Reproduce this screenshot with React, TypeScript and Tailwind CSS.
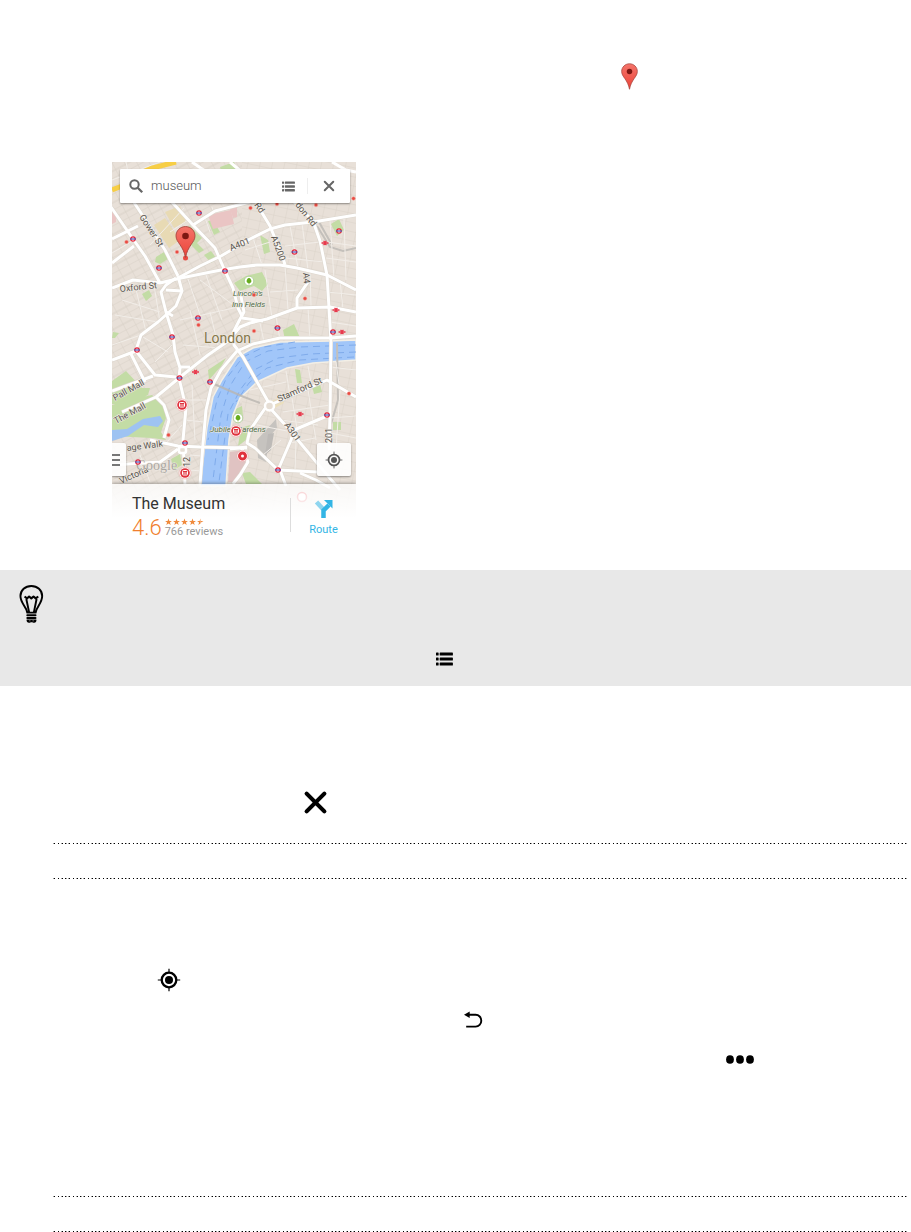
import { useId, useState } from "react";

const LABEL_FONT = "Roboto, 'Liberation Sans', sans-serif";

const PARKS = [
  "M112 405 L128 400 L152 395 L163 405 L166 418 L161 432 L166 440 L152 438 L112 436Z",
  "M112 381 L126 371 L142 388 L150 388 L148 395 L130 404 L112 404Z",
  "M178 232 L190 226 L202 238 L196 244Z M191 237 L204 250 L199 253 L189 243Z",
  "M208 221 L213 220 L220 232 L214 235Z",
  "M156 257 L164 252 L168 259 L160 264 L155 262Z",
  "M204 255 L211 251 L217 259 L211 263Z",
  "M220 167 L234 162 L240 177 L224 180Z",
  "M260 235 L268 240 L270 252 L264 254Z",
  "M234 283 L246 276 L262 272 L268 284 L262 291 L254 286 L240 291Z",
  "M142 294 L149 290 L152 296 L146 301Z",
  "M283 330 L294 324 L301 340 L285 340Z",
  "M208 370 L226 358 L222 365 L209 380Z",
  "M295 369 L300 370 L302 383 L297 383Z",
  "M233 410 L242 406 L243 416 L236 418Z",
  "M241 428 L250 425 L246 440 L238 446Z",
  "M171 459 L180 454 L182 465 L174 470Z",
  "M331 224 L339 219 L344 230 L337 236Z",
  "M113 332 L119 333 L115 338 L112 338Z",
  "M333 422 L341 422 L341 430 L333 430Z",
  "M242 473 L250 472 L262 484 L246 484Z",
  "M312 386 L320 384 L322 392 L314 394Z",
];

const BUILDINGS = [
  { d: "M154 225 L165 218 L180 240 L169 248Z", fill: "#e8dab4" },
  { d: "M165 212 L180 206 L186 222 L174 228Z", fill: "#e8dab4" },
  { d: "M208 215 L231 210 L234 224 L213 229Z", fill: "#eac5c4" },
  { d: "M112 208 L116 212 L116 222 L112 224Z", fill: "#eac5c4" },
  { d: "M230 209 L237 207 L237 217 L233 218Z", fill: "#eac5c4" },
  { d: "M230 452 L244 450 L246 466 L235 482 L228 482Z", fill: "#e0c3c2" },
  { d: "M257 440 L276 419 L277 428 L269 437 L266 462 L258 458Z", fill: "#c6c3bf" },
  { d: "M268 434 L274 433 L271 450 L265 455Z", fill: "#bdbab7" },
  { d: "M266 403 L282 397 L284 403 L268 412Z", fill: "#ecdfbd" },
];

const MINOR_ROADS = [
  "M150 245 L184 208", "M112 253 L134 240", "M205 218 L210 232",
  "M238 205 L246 190", "M212 207 L214 213", "M126 162 L134 202",
  "M112 180 L160 162", "M185 270 L200 315", "M200 280 L240 310", "M206 275 L222 320",
  "M115 315 L158 322", "M122 300 L160 312", "M135 285 L146 332", "M154 285 L160 322",
  "M112 345 L141 335", "M180 320 L238 307", "M183 345 L220 348", "M190 310 L200 355",
  "M210 312 L218 345", "M245 250 L270 242", "M252 235 L262 265", "M290 226 L298 268",
  "M302 223 L308 270", "M285 246 L320 242", "M286 258 L324 262", "M330 221 L334 278",
  "M344 219 L346 280", "M320 241 L356 246", "M326 258 L356 262", "M265 270 L272 318",
  "M285 266 L288 310", "M270 292 L298 290", "M310 270 L311 306", "M327 292 L356 295",
  "M340 280 L343 310", "M330 322 L356 326", "M308 308 L310 340", "M276 316 L280 340",
  "M260 323 L264 342", "M286 371 L290 396", "M308 366 L312 388", "M336 362 L339 384",
  "M330 367 L356 370", "M250 390 L286 382", "M283 412 L330 405", "M281 420 L318 425",
  "M292 398 L298 435", "M308 390 L316 440", "M340 390 L336 450", "M330 418 L356 416",
  "M330 433 L356 438", "M257 425 L287 431", "M263 455 L281 440", "M290 443 L315 438",
  "M296 440 L295 472", "M184 400 L206 400", "M185 420 L204 422", "M192 385 L195 440",
  "M167 442 L182 425", "M120 460 L160 470", "M140 455 L150 482", "M155 362 L172 345",
  "M143 337 L168 352", "M190 455 L202 456", "M190 470 L201 471", "M170 232 L188 220",
];

const ROADS = [
  "M111 207 L133 239 L145 256 L160 283",
  "M133 201 L151 228 L165 250 L178 276",
  "M171 201 L193 225 L215 248 L225 271 L233 288 L238 308 L242 316",
  "M112 288 L133 280 L160 283 L181 278 L221 270 L240 267 L257 265 L280 265 L297 268 L327 275 L356 290",
  "M178 278 L200 266 L221 256 L250 239 L270 229 L285 225 L313 222 L356 215",
  "M253 198 L270 226 L283 258 L285 265",
  "M292 200 L313 221 L320 241 L327 275 L329 308 L331 342 L330 415 L329 450",
  "M176 278 L166 285 L161 292 L166 312 L173 335 L175 352 L180 368 L179 378 L186 408 L183 440 L185 484",
  "M166 290 L182 291 L176 306 L158 322 L141 335 L136 350",
  "M182 291 L178 276 M166 312 L173 316",
  "M112 360 L136 351 L155 375 L176 377",
  "M130 352 L145 382",
  "M112 391 L153 376",
  "M122 412 L156 397 L179 378 L208 355 L234 337",
  "M180 367 L190 367",
  "M112 263 L134 246",
  "M230 343 L234 334 L240 327 L250 323 L267 319 L297 308 L330 307 L356 312",
  "M240 291 L244 312 L239 321 L233 333 L234 345 L243 357 L270 405",
  "M297 308 L297 298 L308 282",
  "M242 318 L263 321",
  "M193 225 L215 211 L250 202",
  "M356 336 L330 338 L280 338 L253 344 L237 351 L221 370 L211 388 L206 410 L203 444 L200 484",
  "M270 405 L327 380 L356 397",
  "M266 407 L250 430 L247 443 L255 448 L278 470 L317 472",
  "M280 470 L286 486 M230 449 L247 447",
  "M270 408 L287 427 L317 463 L340 490",
  "M278 470 L291 440 L294 430 L327 416",
  "M150 440 L178 446 L200 447 L247 448",
  "M112 465 L160 462 L178 449",
  "M156 397 L164 405 L169 420 L164 438",
  "M112 239 L138 226 M155 201 L187 201",
  "M241 447 L248 462 L240 475 L233 484",
  "M300 473 L316 480 L330 488",
];

const DASHES = [
  "M356 345 L300 347 L268 351 L245 362 L230 386 L221 415 L213 480",
  "M356 352 L310 354 L278 358 L256 369 L240 390 L228 414 L219 482",
  "M354 357 L300 360 L267 368 L249 383 L236 402",
  "M295 342 L264 347 L243 357 L226 379 L217 400 L208 440",
];

const TUBES = [
  [199, 213], [133, 239], [159, 268], [225, 271], [339, 231], [294.5, 252],
  [198, 318], [172, 337], [137, 350], [179.5, 378], [210, 382], [277.5, 328],
  [333, 332], [327, 415], [185, 443], [138, 462], [278, 470],
];

const DOTS = [
  [126.5, 242], [177, 252], [250.5, 208], [277, 204], [316, 205], [353.5, 198.5],
  [198.5, 325], [254, 331], [305, 298.5], [254, 295], [349, 393.5], [168.5, 435],
];

const TRAINS = [
  [325, 243], [336, 310], [342, 332], [195.5, 372], [300, 414],
];

const BUSES = [
  [182, 405], [236, 431], [185, 473],
];

const LABELS = [
  { text: "Gower St", x: 139, y: 217, size: 9, angle: 57 },
  { text: "Oxford St", x: 120, y: 292, size: 9, angle: -6 },
  { text: "A401", x: 231, y: 251, size: 9, angle: -22 },
  { text: "A5200", x: 271, y: 237, size: 9, angle: 70 },
  { text: "A4", x: 303, y: 273, size: 9, angle: 84 },
  { text: "don Rd", x: 295, y: 205, size: 9, angle: 52 },
  { text: "Rd", x: 254, y: 205, size: 9, angle: 55 },
  { text: "Pall Mall", x: 115, y: 401, size: 9, angle: -29 },
  { text: "The Mall", x: 116, y: 424, size: 9, angle: -28 },
  { text: "Stamford St", x: 279, y: 402, size: 9, angle: -24 },
  { text: "A301", x: 284, y: 425, size: 9, angle: 55 },
  { text: "201", x: 332, y: 443, size: 9, angle: -90 },
  { text: "12", x: 190, y: 467, size: 9, angle: -90 },
  { text: "age Walk", x: 127, y: 451, size: 9, angle: -7 },
  { text: "Victoria", x: 121, y: 484, size: 9, angle: -24 },
];

function Pin({ className }: { className?: string }) {
  const fillId = useId();

  return (
    <svg viewBox="0 0 18 28" className={className} aria-hidden="true">
      <defs>
        <linearGradient id={fillId} x1="0" y1="0" x2="0" y2="1">
          <stop offset="0" stopColor="#f4746a" />
          <stop offset="1" stopColor="#ec4338" />
        </linearGradient>
      </defs>
      <path
        d="M9 .5C4.400 .5 .7 4.100 .7 8.600c0 3.100 1.600 5 3.300 7.500C6.400 19.600 8 22.600 9 27.500c1-4.900 2.600-7.900 5-11.400 1.700-2.500 3.300-4.400 3.300-7.500C17.300 4.100 13.600 .5 9 .5z"
        fill={`url(#${fillId})`}
        stroke="#a8463f"
        strokeWidth=".8"
      />
      <circle cx="9" cy="8.800" r="2.900" fill="#7d1712" />
    </svg>
  );
}

function ListIcon({ className }: { className?: string }) {
  return (
    <svg viewBox="0 0 18 14" fill="currentColor" className={className} aria-hidden="true">
      {[0, 5.300, 10.600].map((y) => (
        <g key={y}>
          <rect x="0" y={y} width="2.800" height="3.300" rx=".6" />
          <rect x="3.900" y={y} width="14" height="3.300" rx=".6" />
        </g>
      ))}
    </svg>
  );
}

function CrossIcon({ className, weight }: { className?: string; weight: number }) {
  return (
    <svg viewBox="0 0 24 24" className={className} aria-hidden="true">
      <path
        d="M3.500 3.500 L20.500 20.500 M20.500 3.500 L3.500 20.500"
        stroke="currentColor"
        strokeWidth={weight}
        strokeLinecap="round"
        fill="none"
      />
    </svg>
  );
}

function LocateIcon({ className }: { className?: string }) {
  return (
    <svg viewBox="0 0 24 24" className={className} aria-hidden="true">
      <g fill="none" stroke="currentColor">
        <circle cx="12" cy="12" r="7.300" strokeWidth="2.300" />
        <path d="M12 .8V5M12 19v4.200M.8 12H5M19 12h4.200" strokeWidth="1.200" />
      </g>
      <circle cx="12" cy="12" r="4" fill="currentColor" />
    </svg>
  );
}

function BulbIcon({ className }: { className?: string }) {
  return (
    <svg viewBox="0 0 26 40" className={className} aria-hidden="true">
      <g fill="none" stroke="#000" strokeLinejoin="round">
        <path
          d="M8.600 29C8.300 23.500 1.500 19.500 1.500 11.800 1.500 5.500 6.500 1.200 12.800 1.200s11.300 4.300 11.300 10.600c0 7.700-6.500 11.700-6.800 17.200z"
          strokeWidth="2"
        />
        <path d="M10.600 29 7.600 14.800M15.400 29l2.900-14.200" strokeWidth="2" />
        <path d="M5.800 12.200l2.500 2 2.200-2 2.300 2 2.300-2 2.300 2 2.600-2" strokeWidth="2.200" />
      </g>
      <g fill="#000">
        <rect x="7.600" y="30.600" width="10.600" height="2.200" rx="1" />
        <rect x="7.600" y="33.500" width="10.600" height="2" rx="1" />
        <path d="M8 36h10c.6 1.300-.5 3.600-2.200 3.600-1.200 0-1.800-.6-2.700-.6s-1.600.6-2.700.6c-1.800 0-3-2.200-2.400-3.600z" />
      </g>
      <path d="M10.500 37.500h1.500M14 37.500h1.500" stroke="#aaa" strokeWidth=".7" />
    </svg>
  );
}

function BackIcon({ className }: { className?: string }) {
  return (
    <svg viewBox="0 0 20 18" className={className} aria-hidden="true">
      <path d="M4 3.500h8.200c3.400 0 6 2.700 6 6.200 0 3.500-2.600 6.300-6 6.300H2.300" fill="none" stroke="#000" strokeWidth="2" />
      <path d="M0 3.500 6 .1v6.800z" />
    </svg>
  );
}

function CityMap() {
  return (
    <svg viewBox="112 162 244 384" className="absolute inset-0 h-full w-full" role="img" aria-label="Map of London">
      <defs>
        <pattern id="blocks" width="11" height="14" patternUnits="userSpaceOnUse" patternTransform="rotate(-28)">
          <path d="M0 0H11M0 0V14M0 8H11" stroke="#d6cec4" strokeWidth=".8" fill="none" />
        </pattern>
        <pattern id="blocksEast" width="12" height="9" patternUnits="userSpaceOnUse" patternTransform="rotate(12)">
          <path d="M0 0H12M0 0V9" stroke="#d8d0c6" strokeWidth=".8" fill="none" />
        </pattern>
      </defs>
      <rect x="112" y="162" width="244" height="384" fill="#e8e0d8" />
      <rect x="112" y="162" width="130" height="384" fill="url(#blocks)" />
      <rect x="242" y="162" width="114" height="384" fill="url(#blocksEast)" />

      <path d={PARKS.join(" ")} fill="#c3dca5" />
      {BUILDINGS.map((b) => (
        <path key={b.d} d={b.d} fill={b.fill} />
      ))}

      {/* park lake */}
      <path d="M112 430 L127 429 L143 419 L160 416 L163 421 L158 427 L144 425 L128 436 L112 441Z" fill="#9ec3f2" />

      {/* river */}
      <path
        d="M356 340 L330 341 L280 342 L253 348 L237 357 L222 380 L213 397 L207 427 L200 486 L226 486 L229 440 L233 415 L240 398 L257 382 L287 368 L313 363 L356 360Z"
        fill="#a1c6f9"
        stroke="#f3efe6"
        strokeWidth="1.500"
      />
      <g fill="none" stroke="#7fabeb" strokeWidth="1" strokeDasharray="7 5">
        {DASHES.map((d) => (
          <path key={d} d={d} />
        ))}
      </g>
      <path d="M214 384 L244 397 L260 403" stroke="#b9b5b0" strokeWidth="2" fill="none" opacity=".8" />
      <path d="M337 343 L338 400 L331 424 M317 226 L330 247 L343 251 L356 248 M319 222 L332 245" stroke="#c4c0bb" strokeWidth="2" fill="none" />

      <g fill="none" stroke="#f2eee9" strokeWidth="1">
        {MINOR_ROADS.map((d) => (
          <path key={d} d={d} />
        ))}
      </g>
      <g fill="none" strokeLinejoin="round">
        {ROADS.map((d) => (
          <path key={d} d={d} stroke="#dcd6cd" strokeWidth="4" />
        ))}
        {ROADS.map((d) => (
          <path key={d} d={d} stroke="#fff" strokeWidth="3" />
        ))}
      </g>
      <g fill="#e6ded5" stroke="#fff" strokeWidth="2.500">
        <circle cx="269.500" cy="406" r="4.500" />
        <rect x="179" y="447" width="7" height="6" rx="2" />
      </g>

      {/* trunk roads above the search box */}
      <path d="M112 190 L122 186 L136 175 L152 168 L176 162" stroke="#f7ce45" strokeWidth="5" fill="none" />
      <path d="M192 162 L205 171 M230 162 L244 174 M332 162 L346 170 L356 172" stroke="#fff" strokeWidth="3" fill="none" />

      <g fontFamily={LABEL_FONT} fill="#5a5650" stroke="#efeae3" strokeWidth="1.200" paintOrder="stroke">
        {LABELS.map((l) => (
          <text key={l.text} x={l.x} y={l.y} fontSize={l.size} transform={`rotate(${l.angle} ${l.x} ${l.y})`}>
            {l.text}
          </text>
        ))}
        <text x="204" y="343" fontSize="14" fill="#85774a">London</text>
        <g fontSize="8" fontStyle="italic" fill="#4d6a45">
          <text x="233" y="296">Lincoln’s</text>
          <text x="232" y="307">Inn Fields</text>
          <text x="210" y="432">Jubilee Gardens</text>
        </g>
        <text x="136" y="470" fontSize="14" fontFamily="'Liberation Serif', serif" fill="#aaa7a2" strokeWidth="1">
          Google
        </text>
      </g>

      {TUBES.map(([x, y]) => (
        <g key={`${x}-${y}`}>
          <circle cx={x} cy={y} r="2.200" fill="#fff" stroke="#e3243b" strokeWidth="1.200" />
          <path d={`M${x - 3} ${y}h6`} stroke="#4a55b5" strokeWidth="1.200" />
        </g>
      ))}
      {TRAINS.map(([x, y]) => (
        <path
          key={`${x}-${y}`}
          d={`M${x - 3.500} ${y}h7M${x - 1.500} ${y - 2}l1.500 1.200 1.500-1.200M${x - 1.500} ${y + 2}l1.500-1.200 1.500 1.200`}
          fill="none"
          stroke="#e83a4d"
          strokeWidth="1.400"
        />
      ))}
      {DOTS.map(([x, y]) => (
        <circle key={`${x}-${y}`} cx={x} cy={y} r="1.800" fill="#e94b42" stroke="#f3a39c" strokeWidth=".5" />
      ))}
      <circle cx="185.500" cy="258" r="2.500" fill="#e94b42" />
      {BUSES.map(([x, y]) => (
        <g key={`${x}-${y}`}>
          <circle cx={x} cy={y} r="6" fill="#fff" stroke="#e9a5a5" strokeWidth=".6" />
          <circle cx={x} cy={y} r="4.800" fill="#e0323c" />
          <rect x={x - 2.500} y={y - 2.500} width="5" height="4.500" rx=".8" fill="none" stroke="#fff" strokeWidth="1" />
          <path d={`M${x - 2.500} ${y}h5`} stroke="#fff" strokeWidth=".8" />
        </g>
      ))}
      <circle cx="242.500" cy="456" r="5.600" fill="#fff" stroke="#e9a5a5" strokeWidth=".6" />
      <circle cx="242.500" cy="456" r="3" fill="#fff" stroke="#e0323c" strokeWidth="3" />
      <circle cx="302" cy="497" r="4.500" fill="#fff" stroke="#e0323c" strokeWidth="1.500" />
      {[[249, 281], [238, 418]].map(([x, y]) => (
        <g key={`${x}-${y}`}>
          <circle cx={x} cy={y} r="4.800" fill="#fff" stroke="#a5c98a" strokeWidth=".8" />
          <path d={`M${x} ${y - 3}c1.600 0 2.400 2 2.400 3.200s-.8 1.800-2.400 1.800-2.400-.6-2.400-1.800.8-3.200 2.400-3.200z`} fill="#66ac1f" />
          <path d={`M${x} ${y}v3.300`} stroke="#66ac1f" strokeWidth=".9" />
        </g>
      ))}
    </svg>
  );
}

function Stars() {
  return (
    <svg viewBox="0 0 40 8" className="h-2 w-10" fill="#f08a3c" role="img" aria-label="4.6 out of 5">
      {[0, 8, 16, 24].map((x) => (
        <path key={x} d={`M${x + 3.500} .5l.9 2.400h2.500l-2 1.600.8 2.500-2.200-1.500-2.200 1.500.8-2.500-2-1.600h2.500z`} />
      ))}
      <path d="M35.500 .5V5.500L33.300 7l.8-2.500-2-1.600h2.500z" />
      <path d="M35.500 2.900h3L35.500 4.800z" />
    </svg>
  );
}

function MapCard() {
  const [query, setQuery] = useState("museum");

  return (
    <section className="relative ml-28 flex h-96 w-[244px] flex-col overflow-hidden" aria-label="Map search">
      <CityMap />

      <div className="relative mr-1.5 ml-2 mt-[7px] flex h-[34px] items-center rounded-[1px] bg-white text-[#666] shadow-[0_1px_2px_rgba(0,0,0,0.4)]">
        <svg viewBox="0 0 16 16" className="ml-2 h-4 w-4 shrink-0" fill="none" stroke="currentColor" strokeWidth="2" aria-hidden="true">
          <circle cx="6.500" cy="6.500" r="4.200" />
          <path d="M9.700 9.700l4.500 4.500" strokeWidth="2.300" />
        </svg>
        <input
          aria-label="Search"
          value={query}
          onChange={(e) => setQuery(e.target.value)}
          className="ml-[7px] w-0 flex-1 bg-transparent font-[Roboto,'Liberation_Sans',sans-serif] text-[13px] font-light text-[#555] outline-none"
        />
        <button type="button" aria-label="Show list" className="mr-3 p-0">
          <ListIcon className="h-[11px] w-[13px]" />
        </button>
        <button
          type="button"
          aria-label="Clear search"
          onClick={() => setQuery("")}
          className="flex h-4 w-[43px] items-center justify-center border-l border-[#eee]"
        >
          <CrossIcon className="h-3 w-3" weight={4} />
        </button>
      </div>

      <div className="relative mt-auto mb-2 flex items-center justify-between pr-[5px]">
        <button
          type="button"
          aria-label="Menu"
          className="flex h-[33px] w-3.5 items-center rounded-r-[2px] bg-white/90 shadow-[0_1px_2px_rgba(0,0,0,0.4)]"
        >
          <svg viewBox="0 0 8 12" className="h-3 w-2" stroke="#777" strokeWidth="2" aria-hidden="true">
            <path d="M0 1h8M0 6h8M0 11h8" />
          </svg>
        </button>
        <button
          type="button"
          aria-label="My location"
          className="flex h-[33px] w-[34px] items-center justify-center rounded-[2px] bg-white/90 text-[#555] shadow-[0_1px_2px_rgba(0,0,0,0.4)]"
        >
          <LocateIcon className="h-[18px] w-[18px]" />
        </button>
      </div>

      <div className="relative flex h-[62px] bg-linear-to-b from-white/75 to-white to-55% font-[Roboto,'Liberation_Sans',sans-serif] shadow-[0_-1px_3px_rgba(0,0,0,0.3)]">
        <div className="flex-1 pt-2.5 pl-5">
          <h2 className="text-[16px] leading-5 text-[#333]">The Museum</h2>
          <div className="flex gap-[3px] pt-0.5">
            <span className="text-[22px] leading-6 font-light text-[#f07f2e]">4.6</span>
            <div className="flex flex-col pt-0.5">
              <Stars />
              <span className="text-[11px] leading-[12px] text-[#999]">766 reviews</span>
            </div>
          </div>
        </div>
        <a
          href="#route"
          className="mt-3.5 mb-3.5 flex w-[66px] flex-col items-center border-l border-[#ddd] text-[11px] leading-3 text-[#33b5e5]"
        >
          <svg viewBox="0 0 20 20" className="mt-px mb-[5px] h-5 w-5 shrink-0" aria-hidden="true">
            <path d="M2.500 3l6.500 7" stroke="#8fd5ef" strokeWidth="4.500" />
            <path d="M9.500 19v-7.500L15 6" fill="none" stroke="#33b5e5" strokeWidth="4.500" />
            <path d="M10 1h8.500v8.500z" fill="#33b5e5" />
          </svg>
          Route
        </a>
      </div>
    </section>
  );
}

function DottedRule({ className }: { className: string }) {
  return (
    <hr
      className={`mr-[3px] ml-[53px] h-px border-0 bg-[linear-gradient(90deg,#999_1px,#000_1px_2px,transparent_2px_5px,#000_5px_6px,transparent_6px_8px,#999_8px_9px,#000_9px_10px,transparent_10px_12px,#000_12px_13px,#999_13px_14px,transparent_14px)] bg-[length:15px_1px] shadow-none ${className}`}
    />
  );
}

export default function App() {
  return (
    <main className="flex flex-col overflow-hidden bg-white pt-[63px] text-black">
      <div className="mb-[72px] pl-[621px]">
        <Pin className="h-[27px] w-[17px]" />
      </div>

      <div className="relative">
        <MapCard />
        {/* selected place */}
        <Pin className="absolute top-16 left-[175px] h-8 w-[21px]" />
      </div>

      <aside className="mt-6 bg-[#e8e8e8] pt-3.5 pb-5">
        <BulbIcon className="ml-[19px] h-10 w-[25px]" />
        <ListIcon className="mt-7 ml-[436px] h-3.5 w-[17px]" />
      </aside>

      <section className="pt-[104px]">
        <CrossIcon className="ml-[303px] h-[25px] w-[25px]" weight={4} />
        <DottedRule className="mt-7" />
      </section>

      <section>
        <DottedRule className="mt-[34px]" />
        <LocateIcon className="mt-[89px] ml-[157px] h-6 w-6" />
        <BackIcon className="mt-[19px] ml-[464px] h-[18px] w-[19px]" />
        <svg viewBox="0 0 28 9" className="mt-[26px] ml-[726px] h-[9px] w-7" aria-hidden="true">
          <ellipse cx="4" cy="4.500" rx="3.900" ry="4.300" />
          <ellipse cx="14" cy="4.500" rx="3.900" ry="4.300" />
          <ellipse cx="24" cy="4.500" rx="3.900" ry="4.300" />
        </svg>
        <DottedRule className="mt-[132px]" />
      </section>

      <DottedRule className="mt-[34px]" />
    </main>
  );
}
